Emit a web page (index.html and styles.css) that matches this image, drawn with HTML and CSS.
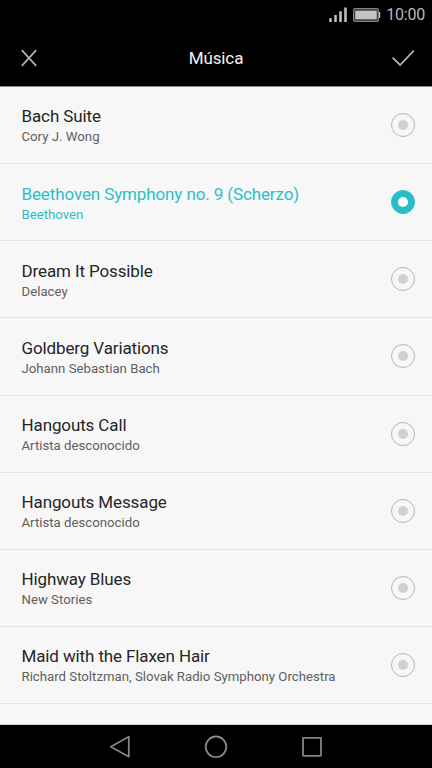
FILE: index.html
```html
<!DOCTYPE html>
<html lang="es">
  <head>
    <meta charset="UTF-8" />
    <meta name="viewport" content="width=device-width, initial-scale=1.0" />
    <title>Música</title>
    <link rel="stylesheet" href="styles.css">
  </head>
  <body>
    <div class="status-bar">
      <svg class="signal" width="18" height="15" viewBox="0 0 18 15">
        <path d="M0.2 11.2h2.6V15H0.2zM5.2 8h2.6v7H5.2zM10.2 4.3h2.6V15h-2.6zM15.2 0.5h2.6V15h-2.6z" />
      </svg>
      <svg class="battery" width="28" height="14" viewBox="0 0 28 14">
        <rect class="battery-case" x="0.75" y="0.75" width="24.5" height="12.5" rx="1.5" />
        <rect class="battery-level" x="2.2" y="2.5" width="21.6" height="9" />
        <path class="battery-level" d="M26 4h1.2v6H26z" />
      </svg>
      <time class="clock">10:00</time>
    </div>
    <header class="action-bar">
      <button class="action" type="button" aria-label="Cancelar">
        <svg width="16" height="18" viewBox="0 0 16 18">
          <path d="M0.8 1.2l14.4 15.6M15.2 1.2L0.8 16.8" />
        </svg>
      </button>
      <h1>Música</h1>
      <button class="action" type="button" aria-label="Aceptar">
        <svg width="24" height="18" viewBox="0 0 24 18">
          <path d="M1.6 8.6l7.5 7.4L22.8 1.6" />
        </svg>
      </button>
    </header>
    <main>
      <ul class="songs">
        <li class="song">
          <div>
            <h2>Bach Suite</h2>
            <p>Cory J. Wong</p>
          </div>
          <span class="radio"></span>
        </li>
        <li class="song selected">
          <div>
            <h2>Beethoven Symphony no. 9 (Scherzo)</h2>
            <p>Beethoven</p>
          </div>
          <span class="radio"></span>
        </li>
        <li class="song">
          <div>
            <h2>Dream It Possible</h2>
            <p>Delacey</p>
          </div>
          <span class="radio"></span>
        </li>
        <li class="song">
          <div>
            <h2>Goldberg Variations</h2>
            <p>Johann Sebastian Bach</p>
          </div>
          <span class="radio"></span>
        </li>
        <li class="song">
          <div>
            <h2>Hangouts Call</h2>
            <p>Artista desconocido</p>
          </div>
          <span class="radio"></span>
        </li>
        <li class="song">
          <div>
            <h2>Hangouts Message</h2>
            <p>Artista desconocido</p>
          </div>
          <span class="radio"></span>
        </li>
        <li class="song">
          <div>
            <h2>Highway Blues</h2>
            <p>New Stories</p>
          </div>
          <span class="radio"></span>
        </li>
        <li class="song">
          <div>
            <h2>Maid with the Flaxen Hair</h2>
            <p>Richard Stoltzman, Slovak Radio Symphony Orchestra</p>
          </div>
          <span class="radio"></span>
        </li>
      </ul>
    </main>
    <nav class="nav-bar">
      <svg width="24" height="24" viewBox="0 0 24 24">
        <path d="M20.8 1.8v20L2.8 11.8z" />
      </svg>
      <svg width="24" height="24" viewBox="0 0 24 24">
        <circle cx="12" cy="11.8" r="10.3" />
      </svg>
      <svg width="24" height="24" viewBox="0 0 24 24">
        <rect x="3" y="2.8" width="18" height="18" rx="0.5" />
      </svg>
    </nav>
  </body>
</html>
```

FILE: styles.css
```css
* {
  box-sizing: border-box;
  margin: 0;
  padding: 0;
}

body {
  display: flex;
  flex-direction: column;
  height: 768px;
  overflow: hidden;
  background: #000;
  font-family: Roboto, sans-serif;
}

.status-bar {
  display: flex;
  align-items: center;
  justify-content: flex-end;
  height: 30px;
  padding-right: 7px;
  color: #b8b8b8;
}

.signal {
  margin-right: 6px;
  margin-bottom: 1px;
  fill: #bcbcbc;
}

.battery {
  margin-right: 5px;
}

.battery-case {
  fill: none;
  stroke: #858585;
  stroke-width: 1.5;
}

.battery-level {
  fill: #c4c4c4;
}

.clock {
  font-size: 16px;
  letter-spacing: -0.2px;
  line-height: 30px;
}

.action-bar {
  display: flex;
  align-items: center;
  justify-content: space-between;
  height: 57px;
  padding: 0 17px 0 21px;
  border-bottom: 1px solid #8f8b8c;
}

.action-bar h1 {
  margin-right: 4px;
  color: #f2f2f2;
  font-size: 17px;
  font-weight: 400;
  letter-spacing: -0.12px;
}

.action {
  display: flex;
  width: 24px;
  border: 0;
  background: none;
}

.action path {
  fill: none;
  stroke: #b0b0b0;
  stroke-width: 1.8;
}

main {
  flex: 1;
  min-height: 0;
  overflow: hidden;
  background: #f7f7f7;
  border-bottom: 1px solid #d0d0d0;
}

.songs {
  list-style: none;
}

.song {
  display: flex;
  align-items: center;
  justify-content: space-between;
  height: 77.14px;
  padding: 0 17px 0 21.5px;
  border-bottom: 1px solid #e3e3e3;
}

.song div {
  padding-top: 2.8px;
}

.song h2 {
  color: #262626;
  font-size: 17px;
  font-weight: 400;
  letter-spacing: -0.12px;
  line-height: 21px;
}

.song p {
  color: #606060;
  font-size: 13.2px;
  letter-spacing: 0.01px;
  line-height: 19px;
}

.radio {
  display: flex;
  align-items: center;
  justify-content: center;
  width: 24px;
  height: 24px;
  border: 1px solid #b5b5b5;
  border-radius: 50%;
}

.radio::before {
  content: "";
  width: 10px;
  height: 10px;
  border-radius: 50%;
  background: #d0d0d0;
}

.song.selected h2,
.song.selected p {
  color: #2bc0c8;
}

.selected .radio {
  border-color: #2bbdc5;
  background: #2bbdc5;
}

.selected .radio::before {
  background: #fff;
}

.nav-bar {
  display: flex;
  align-items: center;
  justify-content: center;
  gap: 72px;
  height: 43px;
}

.nav-bar svg {
  fill: none;
  stroke: #858585;
  stroke-width: 1.8;
  stroke-linejoin: round;
}
```
